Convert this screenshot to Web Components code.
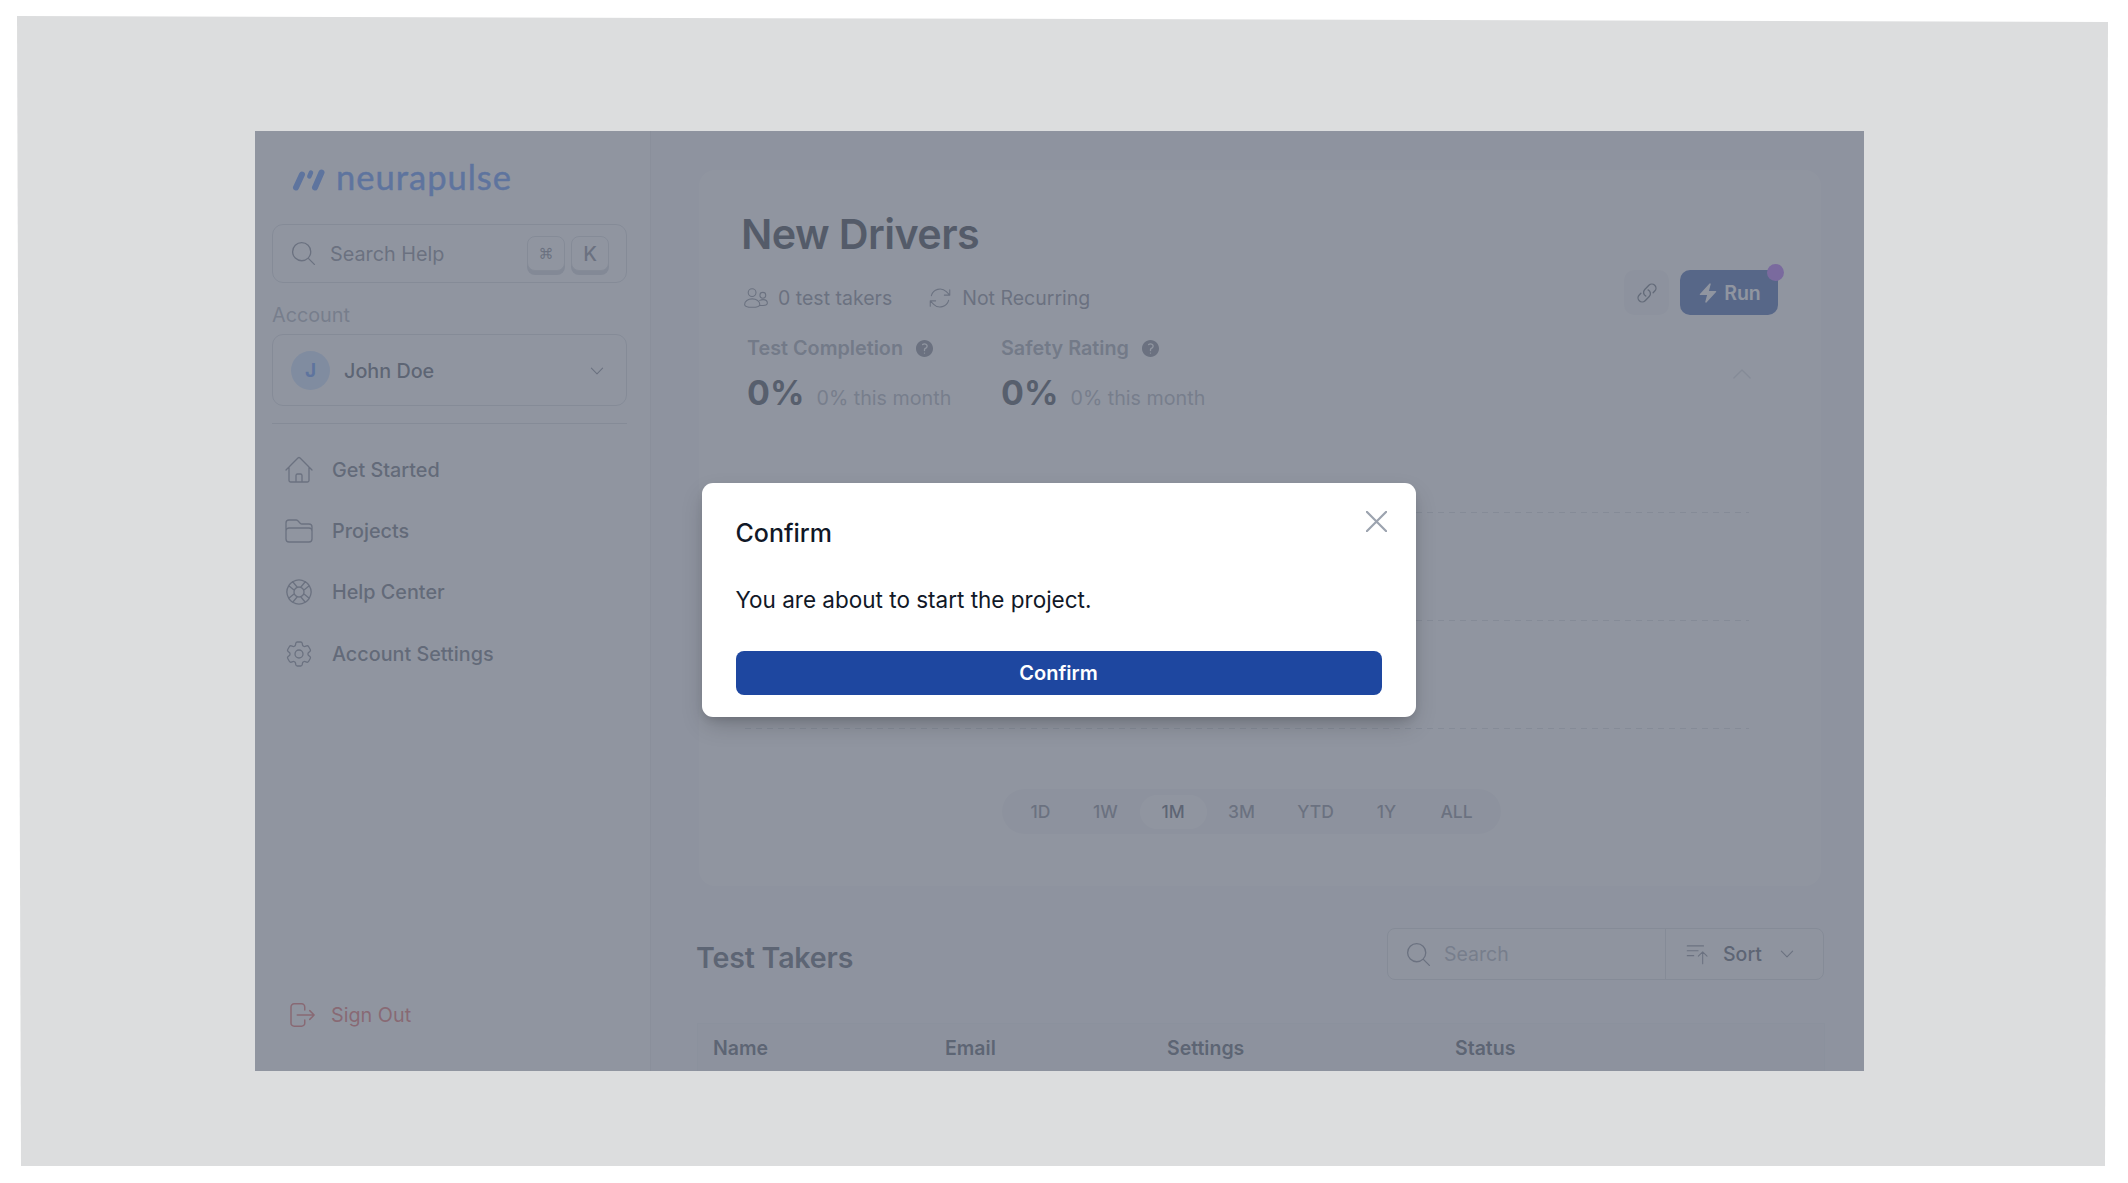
<!DOCTYPE html>
<html lang="en">
<head>
<meta charset="utf-8">
<title>Confirm</title>
<style>
  html, body { margin: 0; background: #fff; height: 100%; overflow: hidden; }
  body { font-family: Inter, "Liberation Sans", sans-serif; }
</style>
</head>
<body>
<app-backdrop>
  <app-frame>
    <side-bar slot="side"></side-bar>
    <main-panel slot="main"></main-panel>
    <confirm-modal slot="overlay"></confirm-modal>
  </app-frame>
</app-backdrop>

<script>
const ICONS = {
  search: "M21 21l-5.197-5.197m0 0A7.5 7.5 0 105.196 5.196a7.5 7.5 0 0010.607 10.607z",
  home: "M2.25 12l8.954-8.955c.44-.439 1.152-.439 1.591 0L21.75 12M4.5 9.75v10.125c0 .621.504 1.125 1.125 1.125H9.75v-4.875c0-.621.504-1.125 1.125-1.125h2.25c.621 0 1.125.504 1.125 1.125V21h4.125c.621 0 1.125-.504 1.125-1.125V9.75M8.25 21h8.25",
  folder: "M2.25 12.75V12A2.25 2.25 0 014.5 9.75h15A2.25 2.25 0 0121.75 12v.75m-8.69-6.44l-2.12-2.12a1.5 1.5 0 00-1.061-.44H4.5A2.25 2.25 0 002.25 6v12a2.25 2.25 0 002.25 2.25h15A2.25 2.25 0 0021.75 18V9a2.25 2.25 0 00-2.25-2.25h-5.379a1.5 1.5 0 01-1.06-.44z",
  help: "M16.712 4.33a9.027 9.027 0 011.652 1.306c.51.51.944 1.064 1.306 1.652M16.712 4.33l-3.448 4.138m3.448-4.138a9.014 9.014 0 00-9.424 0M19.67 7.288l-4.138 3.448m4.138-3.448a9.014 9.014 0 010 9.424m-4.138-5.976a3.736 3.736 0 00-.88-1.388 3.737 3.737 0 00-1.388-.88m2.268 2.268a3.765 3.765 0 010 2.528m-2.268-4.796a3.765 3.765 0 00-2.528 0m4.796 4.796c-.181.506-.475.982-.88 1.388a3.736 3.736 0 01-1.388.88m2.268-2.268l4.138 3.448m0 0a9.027 9.027 0 01-1.306 1.652c-.51.51-1.064.944-1.652 1.306m0 0l-3.448-4.138m3.448 4.138a9.014 9.014 0 01-9.424 0m5.976-4.138a3.765 3.765 0 01-2.528 0m0 0a3.736 3.736 0 01-1.388-.88 3.737 3.737 0 01-.88-1.388m2.268 2.268L7.288 19.67m0 0a9.024 9.024 0 01-1.652-1.306 9.027 9.027 0 01-1.306-1.652m0 0l4.138-3.448M4.33 16.712a9.014 9.014 0 010-9.424m4.138 5.976a3.765 3.765 0 010-2.528m0 0c.181-.506.475-.982.88-1.388a3.736 3.736 0 011.388-.88m-2.268 2.268L4.33 7.288m6.406 1.18L7.288 4.33m0 0a9.024 9.024 0 00-1.652 1.306A9.025 9.025 0 004.33 7.288",
  cog: "M9.594 3.94c.09-.542.56-.94 1.11-.94h2.593c.55 0 1.02.398 1.11.94l.213 1.281c.063.374.313.686.645.87.074.04.147.083.22.127.324.196.72.257 1.075.124l1.217-.456a1.125 1.125 0 011.37.49l1.296 2.247a1.125 1.125 0 01-.26 1.431l-1.003.827c-.293.24-.438.613-.431.992a6.759 6.759 0 010 .255c-.007.378.138.75.43.99l1.005.828c.424.35.534.954.26 1.43l-1.298 2.247a1.125 1.125 0 01-1.369.491l-1.217-.456c-.355-.133-.75-.072-1.076.124a6.57 6.57 0 01-.22.128c-.331.183-.581.495-.644.869l-.213 1.28c-.09.543-.56.941-1.11.941h-2.594c-.55 0-1.02-.398-1.11-.94l-.213-1.281c-.062-.374-.312-.686-.644-.87a6.52 6.52 0 01-.22-.127c-.325-.196-.72-.257-1.076-.124l-1.217.456a1.125 1.125 0 01-1.369-.49l-1.297-2.247a1.125 1.125 0 01.26-1.431l1.004-.827c.292-.24.437-.613.43-.992a6.932 6.932 0 010-.255c.007-.378-.138-.75-.43-.99l-1.004-.828a1.125 1.125 0 01-.26-1.43l1.297-2.247a1.125 1.125 0 011.37-.491l1.216.456c.356.133.751.072 1.076-.124.072-.044.146-.087.22-.128.332-.183.582-.495.644-.869l.214-1.281zM15 12a3 3 0 11-6 0 3 3 0 016 0z",
  signout: "M15 8V5.5A2.5 2.5 0 0012.5 3h-6A2.5 2.5 0 004 5.5v13A2.5 2.5 0 006.5 21h6a2.5 2.5 0 002.5-2.5V16M9 12h13.5m-3.5-3.5l3.5 3.5-3.5 3.5",
  down: "M19.5 8.25l-7.5 7.5-7.5-7.5",
  up: "M4.5 15.75l7.5-7.5 7.5 7.5",
  refresh: "M16.023 9.348h4.992M2.985 19.644v-4.992m0 0h4.992m-4.993 0l3.181 3.183a8.25 8.25 0 0013.803-3.7M4.031 9.865a8.25 8.25 0 0113.803-3.7l3.181 3.182m0-4.991v4.99",
  users: "M12 7a3.6 3.6 0 11-7.2 0 3.6 3.6 0 017.2 0zM21 9.5a2.7 2.7 0 11-5.4 0 2.7 2.7 0 015.4 0zM1.5 18c0-3 3-5.2 7-5.2s7 2.2 7 5.2c0 1.6-3 2.6-7 2.6s-7-1-7-2.6zM15.5 14.2c.8-.4 1.9-.7 3-.7 2.4 0 4 1.4 4 3.2 0 1.4-1.6 2.2-4 2.2h-3",
  link: "M13.19 8.688a4.5 4.5 0 011.242 7.244l-4.5 4.5a4.5 4.5 0 01-6.364-6.364l1.757-1.757m13.35-.622l1.757-1.757a4.5 4.5 0 00-6.364-6.364l-4.5 4.5a4.5 4.5 0 001.242 7.244",
  sort: "M3 4.5h15M3 9h10M3 13.5h6M17.25 21V10m-4 4l4-4 4 4",
  close: "M6 18L18 6M6 6l12 12",
};
const QUESTION = "M2.25 12c0-5.385 4.365-9.75 9.75-9.75s9.75 4.365 9.75 9.75-4.365 9.75-9.75 9.75S2.25 17.385 2.25 12zm11.378-3.917c-.89-.777-2.366-.777-3.255 0a.75.75 0 01-.988-1.129c1.454-1.272 3.776-1.272 5.23 0 1.513 1.324 1.513 3.518 0 4.842a3.75 3.75 0 01-.837.552c-.676.328-1.028.774-1.028 1.152v.75a.75.75 0 01-1.5 0v-.75c0-1.279 1.06-2.107 1.875-2.502.182-.088.351-.199.503-.331.83-.727.83-1.857 0-2.584zM12 18a.75.75 0 100-1.5.75.75 0 000 1.5z";
const BOLT = "M14.615 1.595a.75.75 0 01.359.852L12.982 9.75h7.268a.75.75 0 01.548 1.262l-10.5 11.25a.75.75 0 01-1.272-.71l1.992-7.302H3.75a.75.75 0 01-.548-1.262l10.5-11.25a.75.75 0 01.913-.143z";

function icon(name, size, stroke = 1.25, view = "0 0 24 24") {
  return `<svg width="${size}" height="${size}" viewBox="${view}" fill="none" stroke="currentColor" stroke-width="${stroke}" stroke-linecap="round" stroke-linejoin="round" style="display:block;flex:none"><path d="${ICONS[name]}"/></svg>`;
}
function solid(d, size) {
  return `<svg width="${size}" height="${size}" viewBox="0 0 24 24" fill="currentColor" style="display:block;flex:none"><path fill-rule="evenodd" clip-rule="evenodd" d="${d}"/></svg>`;
}

class ShadowBase extends HTMLElement {
  constructor() {
    super();
    const template = document.createElement("template");
    template.innerHTML = this.render();
    this.attachShadow({ mode: "open" }).appendChild(template.content.cloneNode(true));
  }
}

class AppBackdrop extends ShadowBase {
  render() {
    return `
      <style>
        :host { display: block; height: 1183px; box-sizing: border-box; padding: 16px 20px 17px 17px; }
        .sheet {
          height: 100%;
          box-sizing: border-box;
          padding: 115px 244px 95px 238px;
          background: #dcddde;
          clip-path: polygon(0 0, 100% 6px, 2088px 100%, 4px 100%);
        }
      </style>
      <div class="sheet"><slot></slot></div>
    `;
  }
}

class AppFrame extends ShadowBase {
  render() {
    return `
      <style>
        :host { display: block; position: relative; height: 940px; overflow: hidden; background: #f6f7f9; }
        .row { display: flex; height: 100%; }
        .scrim {
          position: absolute; inset: 0;
          background: rgba(107, 114, 128, .75);
          display: flex; align-items: center; justify-content: center;
        }
      </style>
      <div class="row"><slot name="side"></slot><slot name="main"></slot></div>
      <div class="scrim"><slot name="overlay"></slot></div>
    `;
  }
}

class NavItem extends ShadowBase {
  render() {
    return `
      <style>
        :host { display: flex; align-items: center; height: 61.3px; color: #4b5563; font-size: 19.8px; font-weight: 500; }
        .ic { width: 32px; display: flex; justify-content: center; margin: 0 17px 0 11px; color: #6b7280; }
      </style>
      <span class="ic">${icon(this.getAttribute("icon"), 32, 1)}</span><slot></slot>
    `;
  }
}

class SideBar extends ShadowBase {
  render() {
    return `
      <style>
        :host {
          display: flex; flex-direction: column; flex: none; box-sizing: border-box;
          width: 396px; height: 100%; padding: 0 23px 0 17px;
          background: #fff; border-right: 1px solid #e5e7eb;
          font-size: 19.8px;
        }
        .logo { display: flex; align-items: center; height: 93px; padding: 0 0 0 20px; box-sizing: border-box; gap: 11px; }
        .logo svg { position: relative; top: 1px; }
        .name { font-family: Lato, sans-serif; font-size: 34.5px; font-weight: 400; -webkit-text-stroke: .5px #3b7cf5; color: #3b7cf5; letter-spacing: 1px; position: relative; top: -1px; }
        .box { border: 1px solid #d1d5db; border-radius: 11px; display: flex; align-items: center; box-sizing: border-box; }
        .search { height: 59px; padding: 0 17px 0 16px; color: #6b7280; }
        .search span.t { margin-left: 12px; flex: 1; }
        kbd {
          font: 500 20px Inter, sans-serif; color: #6b7280;
          width: 38px; height: 35px; margin-left: 6px; box-sizing: border-box;
          display: flex; align-items: center; justify-content: center;
          border: 1px solid #d1d5db; border-radius: 8px; background: #fff;
          box-shadow: 0 4px 0 #c9ced6;
        }
        kbd.cmd { font-size: 15px; font-family: "DejaVu Sans", sans-serif; }
        .label { color: #9ca3af; margin: 19px 0 6px; line-height: 26px; height: 26px; }
        .account { height: 72px; padding: 1px 17px 0 18px; }
        .avatar {
          width: 39px; height: 39px; border-radius: 50%; background: #bfdbfe; color: #3b7cf5;
          display: flex; align-items: center; justify-content: center; font-weight: 700; font-size: 19px;
        }
        .who { flex: 1; margin-left: 14px; font-weight: 500; color: #374151; font-size: 19.8px; }
        .chev { color: #6b7280; margin-right: 3px; }
        hr { border: 0; border-top: 1px solid #d1d5db; margin: 17px 0 15px; width: 100%; }
        nav { display: flex; flex-direction: column; }
        .out { margin-top: auto; margin-bottom: 40px; display: flex; align-items: center; color: #e0524f; height: 32px; }
        .out .ic { margin: 0 15px 0 14px; }
      </style>
      <div class="logo">
        <svg width="33" height="24" viewBox="0 0 33 24" fill="none" stroke="#3b7cf5" stroke-linecap="round" stroke-width="6" style="flex:none">
          <path d="M4 20.5L10 7.5"/>
          <path d="M17.3 9.5L19 5.5" stroke-width="4.5"/>
          <path d="M23 20.5L29.5 5.5"/>
        </svg>
        <span class="name">neurapulse</span>
      </div>
      <div class="box search">
        ${icon("search", 29, 1.1)}
        <span class="t">Search Help</span>
        <kbd class="cmd">⌘</kbd><kbd>K</kbd>
      </div>
      <div class="label">Account</div>
      <div class="box account">
        <span class="avatar">J</span>
        <span class="who">John Doe</span>
        <span class="chev">${icon("down", 18, 1.5)}</span>
      </div>
      <hr>
      <nav>
        <nav-item icon="home">Get Started</nav-item>
        <nav-item icon="folder">Projects</nav-item>
        <nav-item icon="help">Help Center</nav-item>
        <nav-item icon="cog">Account Settings</nav-item>
      </nav>
      <div class="out"><span class="ic">${icon("signout", 30, 1.2)}</span>Sign Out</div>
    `;
  }
}

class StatBlock extends ShadowBase {
  render() {
    return `
      <style>
        :host { display: block; width: 254px; }
        .top { display: flex; align-items: center; gap: 11px; height: 26px; color: #8b93a1; font-size: 19.8px; font-weight: 600; }
        .q { color: #6b7280; }
        .val { display: flex; align-items: baseline; margin-top: 10px; height: 44px; line-height: 44px; }
        b { font-size: 34px; font-weight: 700; color: #1f2937; margin-right: 12px; }
        small { font-size: 19.7px; color: #9ca3af; }
      </style>
      <div class="top"><span>${this.getAttribute("label")}</span><span class="q">${solid(QUESTION, 21)}</span></div>
      <div class="val"><b>0%</b><small>0% this month</small></div>
    `;
  }
}

class RangePicker extends ShadowBase {
  render() {
    const opts = ["1D", "1W", "1M", "3M", "YTD", "1Y", "ALL"];
    const widths = [52, 68, 67, 70, 78, 64, 76];
    return `
      <style>
        :host {
          display: flex; align-items: center; box-sizing: border-box;
          height: 45px; width: 499px; padding: 0 6px 0 13px; border-radius: 23px; background: #f3f4f6;
          color: #6b7280; font-size: 17.5px; font-weight: 500;
        }
        span { flex: none; height: 34px; line-height: 34px; text-align: center; border-radius: 17px; }
        span:first-of-type { margin-right: 5px; }
        .on { background: #fff; color: #374151; }
      </style>
      ${opts.map((o, i) => `<span class="${o === "1M" ? "on" : ""}" style="width:${widths[i]}px">${o}</span>`).join("")}
    `;
  }
}

class ProjectCard extends ShadowBase {
  render() {
    return `
      <style>
        :host { display: block; box-sizing: border-box; margin: 0 4px 0 2px; height: 716px; padding: 39px 43px 0 42px; background: #fff; border-radius: 16px; }
        .head { display: flex; justify-content: space-between; height: 221px; }
        h1 { margin: 0; font-size: 41.3px; line-height: 50px; font-weight: 600; color: #111827; letter-spacing: -.6px; }
        .meta { display: flex; align-items: center; height: 26px; margin-top: 26px; margin-left: 2px; color: #6b7280; font-size: 19.5px; }
        .meta svg { color: #6b7280; }
        .meta span { margin: 0 35px 0 9px; }
        .stats { display: flex; margin: 24px 0 0 6px; }
        .actions { display: flex; flex-direction: column; align-items: flex-end; padding-top: 61px; }
        .btns { display: flex; gap: 11px; }
        .link, .run { height: 45px; border-radius: 10px; display: flex; align-items: center; justify-content: center; position: relative; }
        .link { width: 45px; background: #f3f4f6; color: #4b5563; }
        .run { width: 98px; background: #1e47a0; color: #fff; font-size: 19.5px; font-weight: 600; gap: 5px; }
        .dot { position: absolute; top: -6px; right: -6px; width: 17px; height: 17px; border-radius: 50%; background: #a855f7; }
        .chev { margin: 46px 23px 0 0; color: #d1d5db; }
        .chart { display: flex; flex-direction: column; justify-content: space-between; height: 217px; margin: 82px 29px 0 4px; }
        .chart i { display: block; height: 1px; background: repeating-linear-gradient(90deg, #d1d5db 0 6px, transparent 6px 11px); }
        .range { display: flex; justify-content: center; margin: 60px 17px 0 0; }
      </style>
      <div class="head">
        <div>
          <h1>New Drivers</h1>
          <div class="meta">
            ${icon("users", 26, 1)}<span>0 test takers</span>
            ${icon("refresh", 26, 1)}<span>Not Recurring</span>
          </div>
          <div class="stats">
            <stat-block label="Test Completion"></stat-block>
            <stat-block label="Safety Rating"></stat-block>
          </div>
        </div>
        <div class="actions">
          <div class="btns">
            <div class="link">${icon("link", 22, 1.5)}</div>
            <div class="run">${solid(BOLT, 22)}Run<i class="dot"></i></div>
          </div>
          <div class="chev">${icon("up", 26, 1.25)}</div>
        </div>
      </div>
      <div class="chart"><i></i><i></i><i></i></div>
      <div class="range"><range-picker></range-picker></div>
    `;
  }
}

class TestTakers extends ShadowBase {
  render() {
    return `
      <style>
        :host { display: block; margin-top: 42px; }
        .bar { display: flex; align-items: center; justify-content: space-between; margin: 0 1px 0 -1px; }
        h2 { margin: 7px 0 0; font-size: 28.6px; font-weight: 600; color: #374151; letter-spacing: -.2px; }
        .tools { display: flex; width: 437px; height: 52px; box-sizing: border-box; border: 1px solid #d1d5db; border-radius: 8px; background: #fafafa; }
        .find { width: 278px; box-sizing: border-box; display: flex; align-items: center; padding-left: 16px; gap: 11px; color: #9ca3af; font-size: 19.5px; border-right: 1px solid #d1d5db; }
        .find svg { color: #6b7280; }
        .sort { flex: 1; display: flex; align-items: center; padding-left: 18px; color: #374151; font-weight: 500; font-size: 19.5px; }
        .sort span { margin: 0 16px 0 13px; }
        .sort svg { color: #6b7280; }
        .table {
          display: grid; grid-template-columns: 232px 222px 288px 1fr; align-items: center;
          height: 48px; margin-top: 43px; padding-left: 15px;
          background: #f3f4f6; border: solid #eceef1; border-width: 1px 1px 0 1px;
          color: #374151; font-size: 19.5px; font-weight: 600;
        }
      </style>
      <div class="bar">
        <h2>Test Takers</h2>
        <div class="tools">
          <div class="find">${icon("search", 29, 1.1)}Search</div>
          <div class="sort">${icon("sort", 26, 1)}<span>Sort</span>${icon("down", 18, 1.5)}</div>
        </div>
      </div>
      <div class="table"><div>Name</div><div>Email</div><div>Settings</div><div>Status</div></div>
    `;
  }
}

class MainPanel extends ShadowBase {
  render() {
    return `
      <style>
        :host { display: block; flex: 1; box-sizing: border-box; height: 100%; padding: 39px 39px 0 46px; overflow: hidden; }
      </style>
      <project-card></project-card>
      <test-takers></test-takers>
    `;
  }
}

class ConfirmModal extends ShadowBase {
  render() {
    return `
      <style>
        :host {
          display: block; position: relative; box-sizing: border-box;
          width: 714px; height: 234px; margin: 0 2px 2px 0; padding: 35px 34px 21px;
          background: #fff; border-radius: 11px;
          box-shadow: 0 10px 24px -4px rgba(0,0,0,.22), 0 4px 8px -2px rgba(0,0,0,.12);
        }
        h3 { margin: 0; font-size: 25px; line-height: 30px; font-weight: 500; color: #111827; }
        p { margin: 37px 0 0; font-size: 22.5px; line-height: 30px; color: #111827; }
        .close { position: absolute; top: 28px; right: 29px; color: #9ca3af; }
        button {
          display: block; width: 100%; height: 44px; margin-top: 36px;
          border: 0; border-radius: 8px; background: #1e47a0; color: #fff;
          font: 600 20px Inter, sans-serif;
        }
      </style>
      <h3>Confirm</h3>
      <span class="close">${icon("close", 21, 1.25, "6 6 12 12")}</span>
      <p>You are about to start the project.</p>
      <button>Confirm</button>
    `;
  }
}

customElements.define("nav-item", NavItem);
customElements.define("stat-block", StatBlock);
customElements.define("range-picker", RangePicker);
customElements.define("side-bar", SideBar);
customElements.define("project-card", ProjectCard);
customElements.define("test-takers", TestTakers);
customElements.define("main-panel", MainPanel);
customElements.define("confirm-modal", ConfirmModal);
customElements.define("app-frame", AppFrame);
customElements.define("app-backdrop", AppBackdrop);
</script>
</body>
</html>
